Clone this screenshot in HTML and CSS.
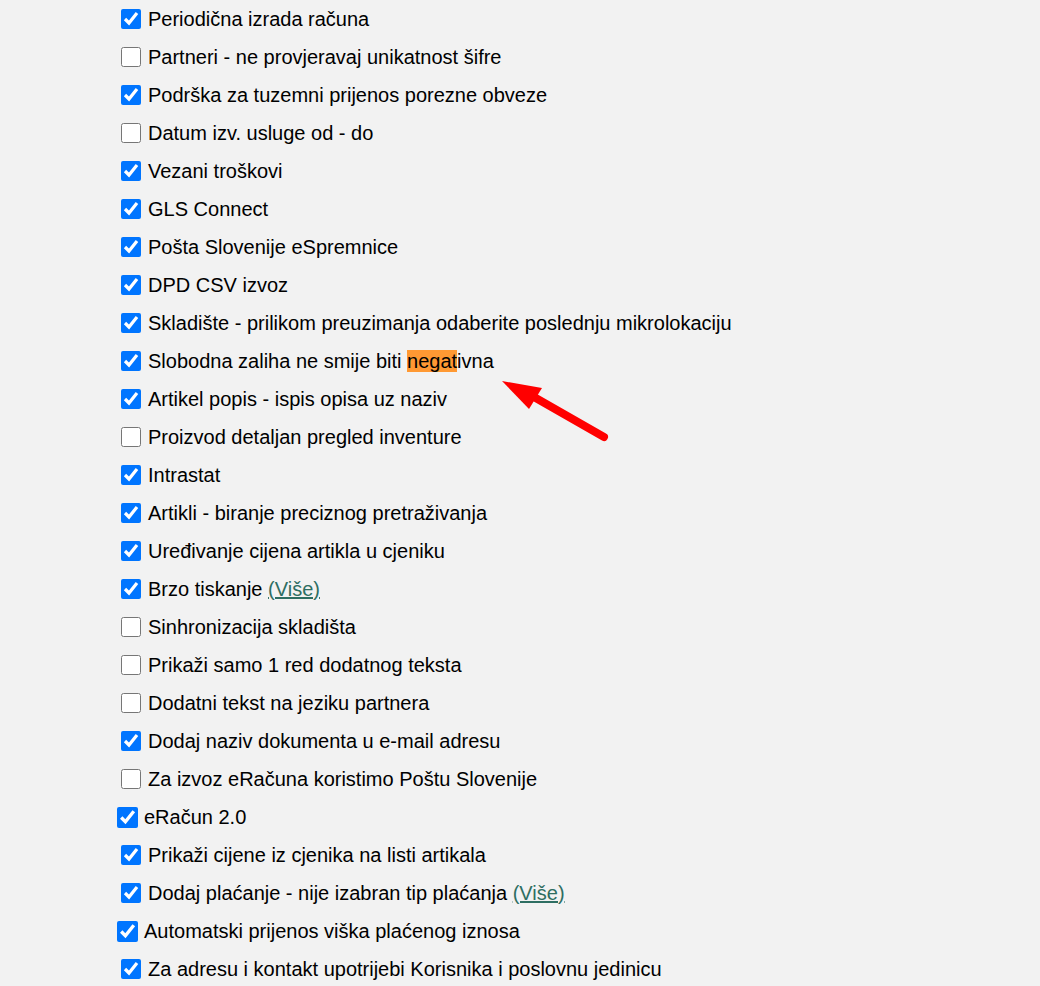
FILE: index.html
```html
<!DOCTYPE html>
<html>
<head>
<meta name="viewport" content="width=device-width, initial-scale=1">
<link rel="stylesheet" href="styles.css">
</head>
<body>

<div class="settings">
<ul class="options">
	<li><input type="checkbox" checked><span>Periodična izrada računa</span></li>
	<li><input type="checkbox"><span>Partneri - ne provjeravaj unikatnost šifre</span></li>
	<li><input type="checkbox" checked><span>Podrška za tuzemni prijenos porezne obveze</span></li>
	<li><input type="checkbox"><span>Datum izv. usluge od - do</span></li>
	<li><input type="checkbox" checked><span>Vezani troškovi</span></li>
	<li><input type="checkbox" checked><span>GLS Connect</span></li>
	<li><input type="checkbox" checked><span>Pošta Slovenije eSpremnice</span></li>
	<li><input type="checkbox" checked><span>DPD CSV izvoz</span></li>
	<li><input type="checkbox" checked><span>Skladište - prilikom preuzimanja odaberite poslednju mikrolokaciju</span></li>
	<li><input type="checkbox" checked><span>Slobodna zaliha ne smije biti <span class="found">negat</span>ivna</span></li>
	<li><input type="checkbox" checked><span>Artikel popis - ispis opisa uz naziv</span></li>
	<li><input type="checkbox"><span>Proizvod detaljan pregled inventure</span></li>
	<li><input type="checkbox" checked><span>Intrastat</span></li>
	<li><input type="checkbox" checked><span>Artikli - biranje preciznog pretraživanja</span></li>
	<li><input type="checkbox" checked><span>Uređivanje cijena artikla u cjeniku</span></li>
	<li><input type="checkbox" checked><span>Brzo tiskanje <a href="#" class="more">(Više)</a></span></li>
	<li><input type="checkbox"><span>Sinhronizacija skladišta</span></li>
	<li><input type="checkbox"><span>Prikaži samo 1 red dodatnog teksta</span></li>
	<li><input type="checkbox"><span>Dodatni tekst na jeziku partnera</span></li>
	<li><input type="checkbox" checked><span>Dodaj naziv dokumenta u e-mail adresu</span></li>
	<li><input type="checkbox"><span>Za izvoz eRačuna koristimo Poštu Slovenije</span></li>
	<li class="loose"><input type="checkbox" checked><span>eRačun 2.0</span></li>
	<li><input type="checkbox" checked><span>Prikaži cijene iz cjenika na listi artikala</span></li>
	<li><input type="checkbox" checked><span>Dodaj plaćanje - nije izabran tip plaćanja <a href="#" class="more">(Više)</a></span></li>
	<li class="loose"><input type="checkbox" checked><span>Automatski prijenos viška plaćenog iznosa</span></li>
	<li><input type="checkbox" checked><span>Za adresu i kontakt upotrijebi Korisnika i poslovnu jedinicu</span></li>
</ul>

<!-- pointer drawn over the screenshot -->
<svg class="pointer" width="130" height="80" viewBox="0 0 130 80">
	<line x1="104" y1="58" x2="34" y2="18" stroke="#ff0000" stroke-width="8" stroke-linecap="round"/>
	<polygon points="2,2 42,9 29,30" fill="#ff0000"/>
</svg>
</div>

</body>
</html>
```

FILE: styles.css
```css
body {
  margin: 0;
  background: #f2f2f2;
  font-family: "Liberation Sans", Arial, sans-serif;
  color: #000;
}

.settings {
  position: relative;
}

/* Remove margins and padding from the list */
.options {
  margin: 0;
  padding: 0 0 0 121px;
  list-style-type: none;
}

.options li {
  display: flex;
  align-items: center;
  height: 38px;
  font-size: 20px;
  white-space: nowrap;
}

.options input {
  width: 20px;
  height: 20px;
  margin: 0 7px 0 0;
}

/* a few rows have a bigger, shifted box */
.options li.loose input {
  width: 21px;
  height: 21px;
  margin: 0 6px 0 -4px;
}

/* search hit */
.found {
  background: #ff9933;
}

.more {
  color: #2e6e62;
  text-decoration: underline;
}

/* red arrow */
.pointer {
  position: absolute;
  left: 500px;
  top: 379px;
}
```
